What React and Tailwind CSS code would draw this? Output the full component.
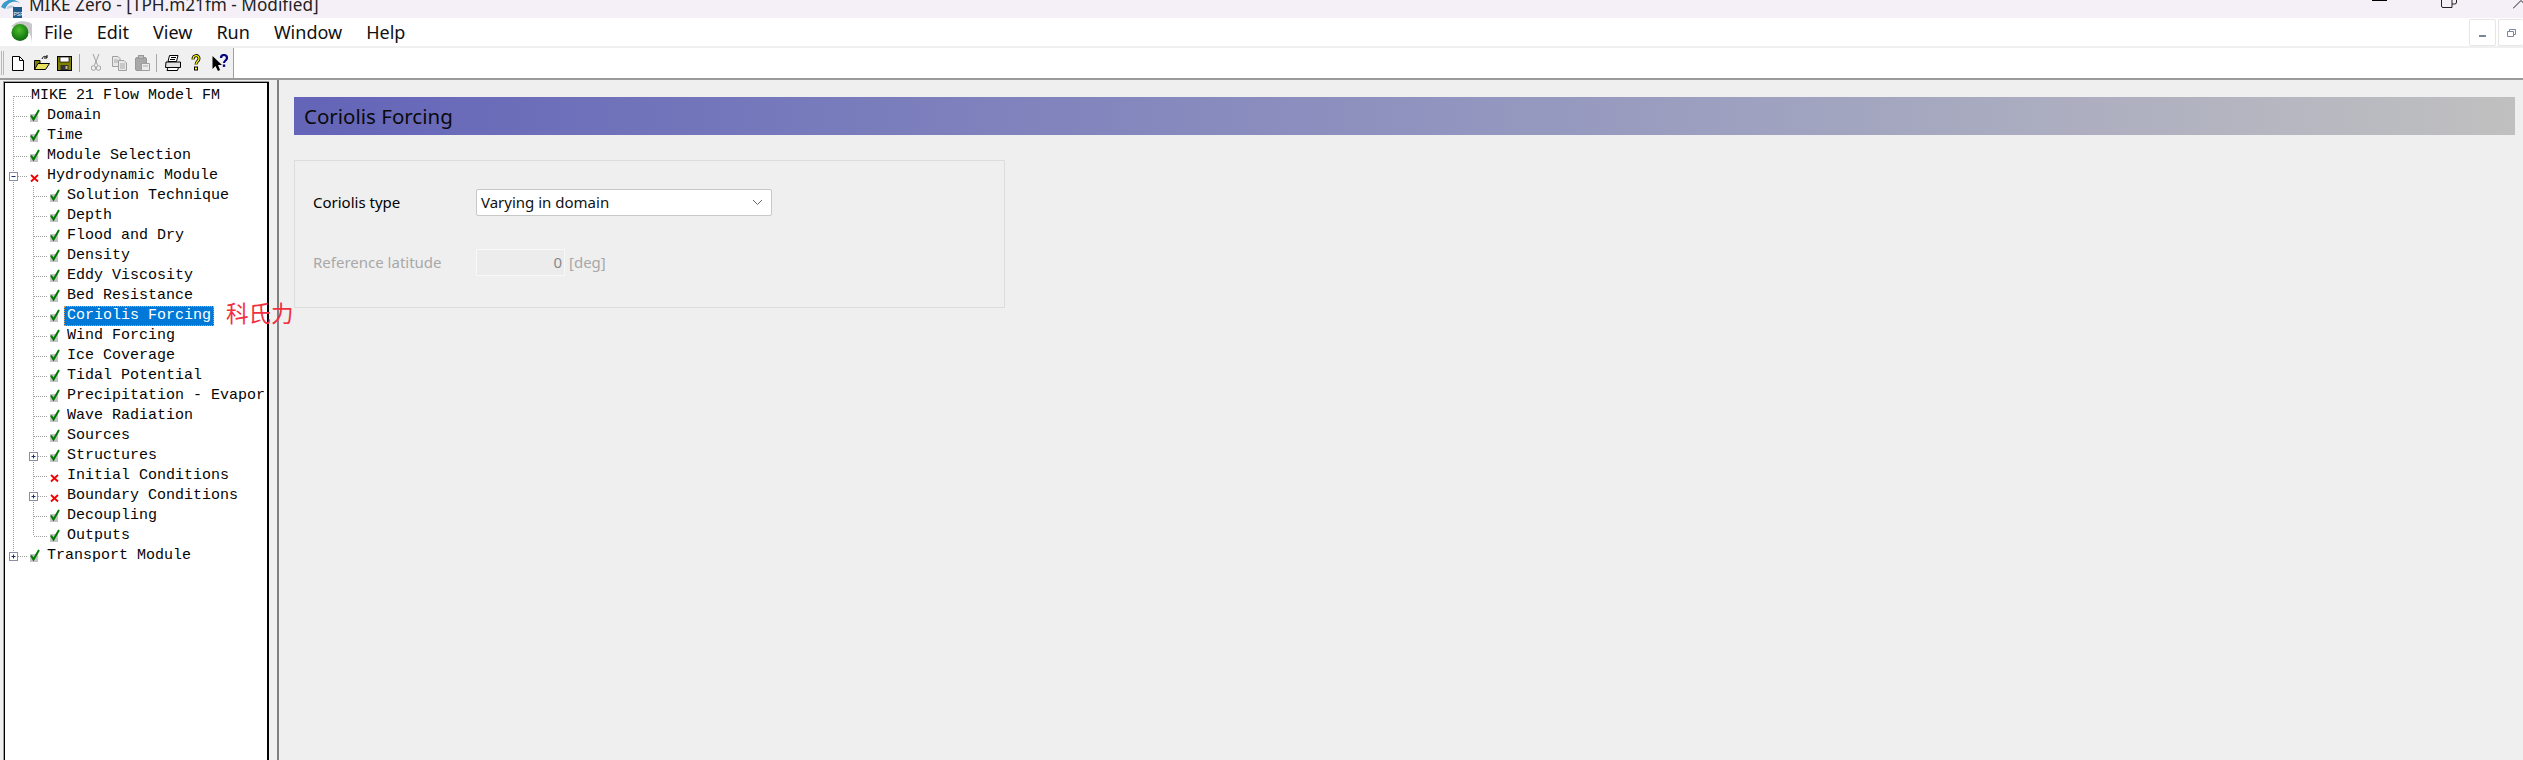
const uiFont = { fontFamily: '"Noto Sans", "Open Sans", sans-serif' };

const menus = ['File', 'Edit', 'View', 'Run', 'Window', 'Help'];

// level 0 = top node, level 1 = child of Hydrodynamic Module
const treeRows = [
    { label: 'MIKE 21 Flow Model FM', level: 0, root: true },
    { label: 'Domain', level: 0, status: 'ok' },
    { label: 'Time', level: 0, status: 'ok' },
    { label: 'Module Selection', level: 0, status: 'ok' },
    { label: 'Hydrodynamic Module', level: 0, status: 'bad', expander: 'minus' },
    { label: 'Solution Technique', level: 1, status: 'ok' },
    { label: 'Depth', level: 1, status: 'ok' },
    { label: 'Flood and Dry', level: 1, status: 'ok' },
    { label: 'Density', level: 1, status: 'ok' },
    { label: 'Eddy Viscosity', level: 1, status: 'ok' },
    { label: 'Bed Resistance', level: 1, status: 'ok' },
    { label: 'Coriolis Forcing', level: 1, status: 'ok', selected: true },
    { label: 'Wind Forcing', level: 1, status: 'ok' },
    { label: 'Ice Coverage', level: 1, status: 'ok' },
    { label: 'Tidal Potential', level: 1, status: 'ok' },
    { label: 'Precipitation - Evapor', level: 1, status: 'ok' },
    { label: 'Wave Radiation', level: 1, status: 'ok' },
    { label: 'Sources', level: 1, status: 'ok' },
    { label: 'Structures', level: 1, status: 'ok', expander: 'plus' },
    { label: 'Initial Conditions', level: 1, status: 'bad' },
    { label: 'Boundary Conditions', level: 1, status: 'bad', expander: 'plus' },
    { label: 'Decoupling', level: 1, status: 'ok' },
    { label: 'Outputs', level: 1, status: 'ok', last: true },
    { label: 'Transport Module', level: 0, status: 'ok', expander: 'plus', end: true },
];

function Expander({ cx, type }) {
    return (
        <g>
            <rect x={cx - 3.5} y={6.5} width="8" height="8" fill="#fff" stroke="#8a8fa8" />
            <line x1={cx - 1.5} y1="10.5" x2={cx + 2.5} y2="10.5" stroke="#1c2f6b" />
            {type === 'plus' && <line x1={cx + 0.5} y1="8.5" x2={cx + 0.5} y2="12.5" stroke="#1c2f6b" />}
        </g>
    );
}

// dotted tree connectors for one row
function Guide({ row }) {
    const dots = { stroke: '#a0a0a0', strokeDasharray: '1 1' };
    const width = row.root ? 25 : row.level === 1 ? 44 : 24;
    return (
        <svg width={width} height="20" className="shrink-0">
            <line x1="7.5" y1={row.root ? 10 : 0} x2="7.5" y2={row.end ? 10 : 20} {...dots} />
            {row.level === 0 && <line x1="8" y1="10.5" x2={row.root ? 25 : 21} y2="10.5" {...dots} />}
            {row.level === 1 && (
                <>
                    <line x1="27.5" y1="0" x2="27.5" y2={row.last ? 10 : 20} {...dots} />
                    <line x1="28" y1="10.5" x2="41" y2="10.5" {...dots} />
                </>
            )}
            {row.expander && <Expander cx={row.level === 1 ? 27 : 7} type={row.expander} />}
        </svg>
    );
}

function StatusIcon({ status }) {
    return (
        <svg width="17" height="20" className="shrink-0">
            {status === 'ok' ? (
                <>
                    <rect x="0" y="8" width="8" height="8" fill="#c4c4c4" />
                    <path d="M1 9.5 L3.5 13.5 L9 4" fill="none" stroke="#007a00" strokeWidth="2" />
                </>
            ) : (
                <path d="M1 9 L8 15.5 M8 9 L1 15.5" fill="none" stroke="#f00000" strokeWidth="1.8" />
            )}
        </svg>
    );
}

function TreeRow({ row }) {
    return (
        <div className="flex h-5 items-center whitespace-nowrap">
            <Guide row={row} />
            {!row.root && <StatusIcon status={row.status} />}
            {row.selected ? (
                <>
                    <span className="-ml-[3px] flex h-5 w-[150px] shrink-0 items-center border border-dotted border-[#e0a050] bg-[#0078d7] pl-[2px] text-white">
                        {row.label}
                    </span>
                    <span className="relative z-10 ml-[12px] -mt-[8px] shrink-0 text-[22.5px] leading-none text-[#f03040]" style={{ fontFamily: '"Noto Sans CJK SC", sans-serif' }}>
                        科氏力
                    </span>
                </>
            ) : (
                <span className="max-w-[197px] overflow-hidden">{row.label}</span>
            )}
        </div>
    );
}

function TitleLogo() {
    return (
        <svg width="24" height="18" className="shrink-0">
            <path d="M1 7 C5 -2 14 -2 20 3 C14 0 8 2 5 9 Z" fill="#3b9ac9" />
            <path d="M6 9 C8 5 12 4 15 7 L11 8 Z" fill="#bcd" />
            <rect x="13" y="7" width="9" height="11" fill="#1f5a8a" />
            <text x="13.5" y="15.5" fontSize="5" fill="#fff" fontFamily="Liberation Sans">PSR</text>
        </svg>
    );
}

function MenuLogo() {
    return (
        <svg width="24" height="26" className="shrink-0">
            <defs>
                <radialGradient id="ball" cx="45%" cy="35%" r="65%">
                    <stop offset="0%" stopColor="#4cc02c" />
                    <stop offset="100%" stopColor="#0c6a0c" />
                </radialGradient>
            </defs>
            <path d="M3 8 C8 1 18 1 24 5 L24 25 C24 13 16 4 3 8 Z" fill="#c8c8c8" />
            <circle cx="12" cy="13.5" r="8.5" fill="url(#ball)" />
        </svg>
    );
}

function ToolIcon({ width, children, className = '' }) {
    return (
        <svg width={width} height="18" viewBox={`0 0 ${width} 18`} className={`shrink-0 ${className}`}>
            {children}
        </svg>
    );
}

function Toolbar() {
    return (
        <div className="flex h-full w-[234px] items-center border-r border-[#a0a0a0] bg-[#f0f0f0]">
            <div className="ml-[1px] mr-[8px] h-[24px] w-[3px] border-x border-[#b8b8b8]" />
            {/* new */}
            <ToolIcon width="12">
                <path d="M0.5 2.5 H7.5 L11.5 6.5 V16.5 H0.5 Z" fill="#fff" stroke="#000" />
                <path d="M7.5 2.5 V6.5 H11.5" fill="none" stroke="#000" />
            </ToolIcon>
            {/* open */}
            <ToolIcon width="16" className="ml-[10px]">
                <path d="M0.5 6.5 H6 V15.5 H0.5 Z" fill="#808000" stroke="#000" />
                <path d="M0.5 15.5 L4 9.5 H15.5 L11.5 15.5 Z" fill="#e8e060" stroke="#000" />
                <path d="M8 5 C9 2 11 2 13 3 M13 1 V4 H10" fill="none" stroke="#000" />
            </ToolIcon>
            {/* save */}
            <ToolIcon width="15" className="ml-[7px]">
                <rect x="0.5" y="2.5" width="14" height="14" fill="#808000" stroke="#000" />
                <rect x="3" y="3" width="9" height="5" fill="#fff" stroke="#000" strokeWidth="0.7" />
                <rect x="3.5" y="11" width="8" height="5" fill="#333" />
                <rect x="8.5" y="12" width="2" height="3" fill="#c0c0a0" />
            </ToolIcon>
            <div className="ml-[7px] h-[18px] w-px bg-[#a8a8a8]" />
            {/* cut, disabled */}
            <ToolIcon width="10" className="ml-[11px]">
                <path d="M2 0 L6.5 11 M8 0 L3.5 11" stroke="#a0a0a0" fill="none" />
                <circle cx="2.5" cy="14" r="2.3" fill="none" stroke="#a0a0a0" />
                <circle cx="7.5" cy="14" r="2.3" fill="none" stroke="#a0a0a0" />
            </ToolIcon>
            {/* copy, disabled */}
            <ToolIcon width="15" className="ml-[11px]">
                <path d="M0.5 2.5 H6 L8 4.5 V12.5 H0.5 Z" fill="#e8e8e8" stroke="#a0a0a0" />
                <path d="M6.5 6.5 H12 L14.5 9 V16.5 H6.5 Z" fill="#e8e8e8" stroke="#a0a0a0" />
                <path d="M2 6 H6 M2 8 H6 M8 10 H13 M8 12 H13 M8 14 H13" stroke="#a8a8a8" />
            </ToolIcon>
            {/* paste, disabled */}
            <ToolIcon width="15" className="ml-[8px]">
                <rect x="0.5" y="3.5" width="11" height="13" rx="1.5" fill="#a8a8a8" stroke="#989898" />
                <rect x="3.5" y="1.5" width="5" height="3" fill="#bbb" stroke="#989898" />
                <path d="M6.5 9.5 H14.5 V16.5 H6.5 Z" fill="#ececec" stroke="#a0a0a0" />
                <path d="M8 12 H13" stroke="#a8a8a8" />
            </ToolIcon>
            <div className="ml-[6px] h-[18px] w-px bg-[#a8a8a8]" />
            {/* print */}
            <ToolIcon width="16" className="ml-[8px]">
                <path d="M4.5 1.5 H13 L11.5 7.5 H3 Z" fill="#fff" stroke="#000" />
                <path d="M1 8 H15.5 V13.5 H0.5 Z" fill="#e0e0e0" stroke="#000" />
                <path d="M3 13.5 H13.5 L12.5 16.5 H2 Z" fill="#fff" stroke="#000" />
                <path d="M6 3.5 H11 M5 5.5 H10" stroke="#000" />
            </ToolIcon>
            {/* help */}
            <ToolIcon width="10" className="ml-[10px]">
                <path d="M2 5.5 C2 0.5 8 0.5 8 4.5 C8 7.5 5 7 5 10.5" fill="none" stroke="#000" strokeWidth="3" />
                <path d="M2 5.5 C2 0.5 8 0.5 8 4.5 C8 7.5 5 7 5 10.5" fill="none" stroke="#ffff00" strokeWidth="1.3" />
                <rect x="3.5" y="13" width="3" height="3" fill="#ffff00" stroke="#000" />
            </ToolIcon>
            {/* whats this */}
            <ToolIcon width="16" className="ml-[11px]">
                <path d="M0.5 2 V15 L3.5 12 L6 17 L8 16 L6 11 H10 Z" fill="#000" />
                <path d="M9 4 C9 0 15 0 15 4 C15 6.5 12 6.5 12 9" fill="none" stroke="#000080" strokeWidth="2.2" />
                <rect x="10.8" y="10.5" width="2.4" height="2.4" fill="#000080" />
            </ToolIcon>
        </div>
    );
}

function GroupField({ label, disabled, children }) {
    return (
        <div className="flex items-center">
            <span className={`w-[163px] text-[15px] ${disabled ? 'text-[#a8a8a8]' : 'text-black'}`}>{label}</span>
            {children}
        </div>
    );
}

export default function App() {
    return (
        <div className="flex h-[760px] w-[2523px] flex-col overflow-hidden bg-white" style={uiFont}>
            {/* title bar */}
            <div className="flex h-[18px] shrink-0 items-start overflow-hidden bg-[#f5f0f8]">
                <TitleLogo />
                <span className="ml-[5px] -mt-[7px] whitespace-nowrap text-[17.2px] leading-[24px] text-[#222]">
                    MIKE Zero - [TPH.m21fm - Modified]
                </span>
                <div className="ml-auto flex items-start">
                    <div className="h-px w-[15px] bg-black" />
                    <svg width="16" height="8" className="ml-[54px]">
                        <path d="M0.5 0 V6 Q0.5 7.5 2 7.5 H11 V0 M11 4 H14 Q15.5 4 15.5 2 V0" fill="none" stroke="#222" />
                    </svg>
                    <svg width="10" height="9" className="ml-[56px]">
                        <path d="M0 8.5 L8 0.5 L16 8.5" fill="none" stroke="#222" />
                    </svg>
                </div>
            </div>

            {/* menu bar */}
            <div className="flex h-[28px] shrink-0 items-center pl-[8px]">
                <MenuLogo />
                <nav className="ml-[12px] flex gap-[24px] text-[18px] text-[#111]">
                    {menus.map((m) => (
                        <span key={m}>{m}</span>
                    ))}
                </nav>
                <div className="ml-auto flex gap-[2px] self-end">
                    <div className="flex h-[27px] w-[27px] items-end justify-center rounded-[2px] border border-[#e6e6e6] pb-[8px]">
                        <div className="h-[2px] w-[7px] bg-[#7b8798]" />
                    </div>
                    <div className="flex h-[27px] w-[25px] items-center justify-center rounded-[2px] border border-r-0 border-[#e6e6e6]">
                        <svg width="9" height="8">
                            <path d="M2.5 2.5 V0.5 H8.5 V5.5 H6.5 M0.5 2.5 H6.5 V7.5 H0.5 Z" fill="none" stroke="#7b8798" />
                        </svg>
                    </div>
                </div>
            </div>

            {/* toolbar */}
            <div className="h-[32px] shrink-0 border-t-2 border-[#f0f0f0]">
                <Toolbar />
            </div>

            {/* body */}
            <div className="flex min-h-0 flex-1 border-t-2 border-[#9a9a9a] bg-[#f0f0f0]">
                <div className="mt-[1px] ml-[3px] flex w-[266px] shrink-0 border-l border-t border-[#a0a0a0]">
                    <div className="min-w-0 flex-1 border-t border-r-2 border-l border-black bg-white pt-[3px] pl-px text-[15px] leading-5 text-[#050505]" style={{ fontFamily: '"Liberation Mono", monospace' }}>
                        {treeRows.map((row) => (
                            <TreeRow key={row.label} row={row} />
                        ))}
                    </div>
                </div>

                <div className="ml-[8px] flex-1 border-l-2 border-[#808080] bg-[#efefef] pt-[17px] pl-[15px] pr-[8px]">
                    <div className="flex h-[38px] items-center bg-gradient-to-r from-[#6464b8] to-[#c0c0c0] pl-[10px] text-[20.5px] text-[#0a0a0a]">
                        Coriolis Forcing
                    </div>

                    <div className="mt-[25px] flex h-[148px] w-[711px] flex-col gap-[33px] border border-[#dcdcdc] pt-[28px] pl-[18px]">
                        <GroupField label="Coriolis type">
                            <div className="flex h-[27px] w-[296px] items-center justify-between rounded-[2px] border border-[#c8c8c8] bg-white pl-[4px] pr-[8px] text-[15px] text-[#111]">
                                <span>Varying in domain</span>
                                <svg width="11" height="7">
                                    <path d="M1 1 L5.5 5.5 L10 1" fill="none" stroke="#666" />
                                </svg>
                            </div>
                        </GroupField>
                        <GroupField label="Reference latitude" disabled>
                            <div className="flex h-[27px] w-[89px] items-center justify-end border border-[#f8f8f8] bg-[#ececec] pr-[2px] text-[15px] text-[#888]">
                                0
                            </div>
                            <span className="ml-[4px] text-[15px] text-[#a8a8a8]">[deg]</span>
                        </GroupField>
                    </div>
                </div>
            </div>
        </div>
    );
}
